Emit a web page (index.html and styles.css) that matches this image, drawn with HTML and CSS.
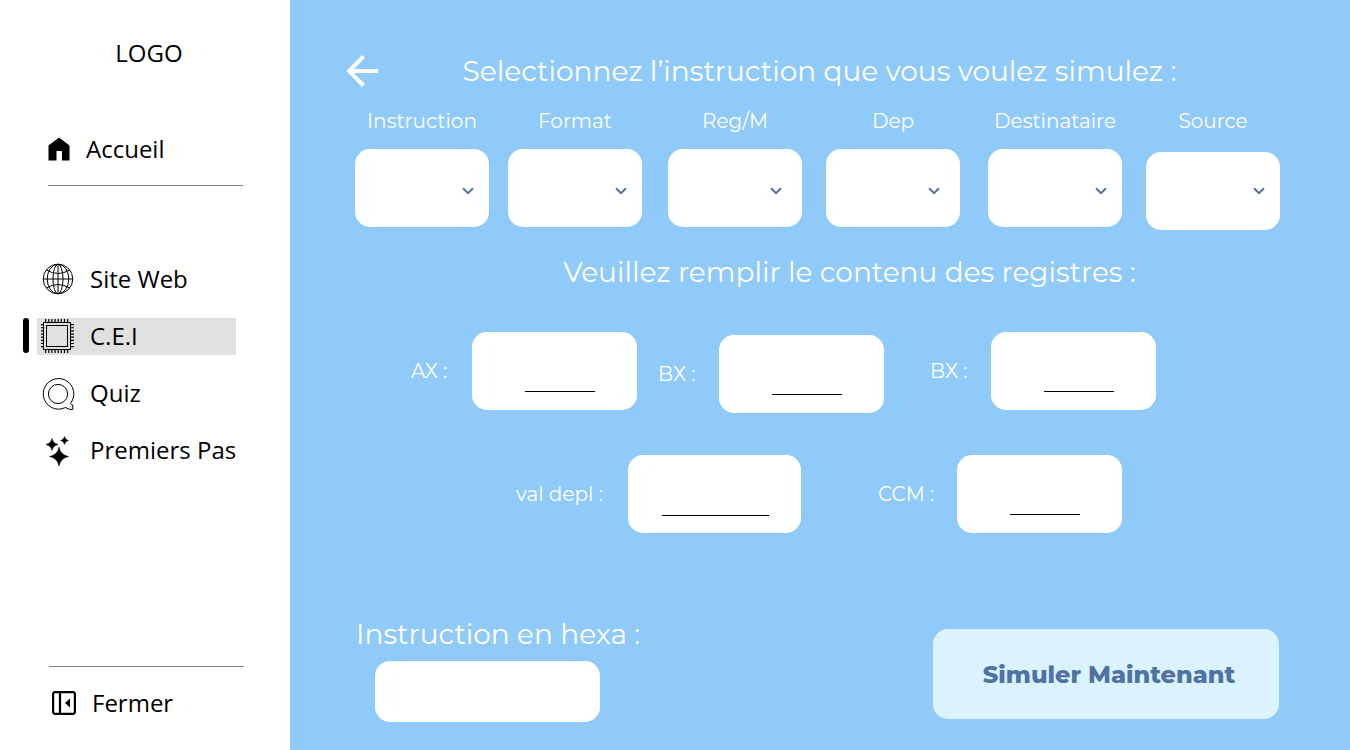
FILE: index.html
```html
<!DOCTYPE html>
<html lang="fr">
<head>
<meta charset="utf-8">
<meta name="viewport" content="width=device-width, initial-scale=1">
<title>C.E.I - Simulateur d'instructions</title>
<link rel="stylesheet" href="styles.css">
</head>
<body>
<div class="app">
  <aside class="sidebar">
    <div class="logo">LOGO</div>
    <a class="link link--home" href="#accueil">
      <svg class="icon-home" viewBox="0 0 22 24" aria-hidden="true"><path d="M0.500 8.500 11 0.500 21.500 8.500V23.500H14V14H8.500V23.500H0.500Z"/></svg>
      <span>Accueil</span>
    </a>
    <nav class="nav" aria-label="Menu principal">
      <a class="link" href="#site">
        <svg class="icon icon--line" viewBox="0 0 34 34" aria-hidden="true"><circle cx="17" cy="17" r="14.800"/><ellipse cx="17" cy="17" rx="5" ry="14.800"/><ellipse cx="17" cy="17" rx="10.800" ry="14.800"/><path d="M17 2.200V31.800M2.200 17H31.800M5.500 8Q17 15 28.500 8M5.500 26Q17 19 28.500 26"/></svg>
        <span>Site Web</span>
      </a>
      <a class="link link--active" href="#cei" aria-current="page">
        <svg class="icon icon--line" viewBox="0 0 34 34" aria-hidden="true"><rect x="2.500" y="3.500" width="27" height="27"/><rect x="5.500" y="6.500" width="21" height="21"/><path d="M4 1.500H29M4 32.500H29" stroke-width="3" stroke-dasharray="1.200 1.950"/><path d="M0.500 5V30M31.500 5V30" stroke-width="3" stroke-dasharray="1.200 1.950"/></svg>
        <span>C.E.I</span>
      </a>
      <a class="link" href="#quiz">
        <svg class="icon icon--line" viewBox="0 0 34 34" aria-hidden="true"><circle cx="17" cy="18" r="9.600"/><path d="M24.500 31.500A15.300 15.300 0 1 1 30.500 26L29.500 27.500Q30 29 31.800 29V33.500Q28 34 24.500 31.500Z"/></svg>
        <span>Quiz</span>
      </a>
      <a class="link" href="#premiers-pas">
        <svg class="icon" viewBox="0 0 34 34" aria-hidden="true"><path d="M18 14Q19.500 22 27.500 23.500Q19.500 25 18 33Q16.500 25 8.500 23.500Q16.500 22 18 14ZM11 5.500Q12 10.500 17 11.500Q12 12.500 11 17.500Q10 12.500 5 11.500Q10 10.500 11 5.500ZM23.500 3.500Q24.200 6.800 27.500 7.500Q24.200 8.200 23.500 11.500Q22.800 8.200 19.500 7.500Q22.800 6.800 23.500 3.500Z" stroke="#000" stroke-width="0.500"/></svg>
        <span>Premiers Pas</span>
      </a>
    </nav>
    <div class="sidebar-foot">
      <button class="link link--close" type="button">
        <svg class="icon-close" viewBox="0 0 24 24" aria-hidden="true"><path fill="none" stroke="#000" stroke-width="2.200" d="M2.500 1.100H21.500L22.900 2.500V21.500L21.500 22.900H2.500L1.100 21.500V2.500ZM8 1V23"/><path d="M13 12 18 7.500V16.500Z"/></svg>
        <span>Fermer</span>
      </button>
    </div>
  </aside>

  <main class="main">
    <header class="head">
      <a class="back" href="#retour" aria-label="Retour">
        <svg class="back-icon" viewBox="0 0 32 32" aria-hidden="true"><path d="M16.500 1.500 2 16 16.500 30.500M2.500 16H31"/></svg>
      </a>
      <h1 class="title">Selectionnez l’instruction que vous voulez simulez :</h1>
    </header>

    <form class="form">
      <div class="choices">
        <div class="choice"><label class="label" for="instruction">Instruction</label>
          <div class="picker"><select class="box select" id="instruction"><option></option></select><svg class="chevron" viewBox="0 0 12 8" aria-hidden="true"><path d="M1 1.200 6 6.200 11 1.200"/></svg></div></div>
        <div class="choice"><label class="label" for="format">Format</label>
          <div class="picker"><select class="box select" id="format"><option></option></select><svg class="chevron" viewBox="0 0 12 8" aria-hidden="true"><path d="M1 1.200 6 6.200 11 1.200"/></svg></div></div>
        <div class="choice"><label class="label" for="regm">Reg/M</label>
          <div class="picker"><select class="box select" id="regm"><option></option></select><svg class="chevron chevron--inner" viewBox="0 0 12 8" aria-hidden="true"><path d="M1 1.200 6 6.200 11 1.200"/></svg></div></div>
        <div class="choice"><label class="label" for="dep">Dep</label>
          <div class="picker"><select class="box select" id="dep"><option></option></select><svg class="chevron chevron--inner" viewBox="0 0 12 8" aria-hidden="true"><path d="M1 1.200 6 6.200 11 1.200"/></svg></div></div>
        <div class="choice"><label class="label" for="destinataire">Destinataire</label>
          <div class="picker"><select class="box select" id="destinataire"><option></option></select><svg class="chevron" viewBox="0 0 12 8" aria-hidden="true"><path d="M1 1.200 6 6.200 11 1.200"/></svg></div></div>
        <div class="choice"><label class="label" for="source">Source</label>
          <div class="picker"><select class="box select lowered" id="source"><option></option></select><svg class="chevron" viewBox="0 0 12 8" aria-hidden="true"><path d="M1 1.200 6 6.200 11 1.200"/></svg></div></div>
      </div>

      <h2 class="title title--registers">Veuillez remplir le contenu des registres :</h2>

      <div class="registers">
        <div class="register"><label class="label" for="ax">AX :</label><div class="box slot"><input class="value" id="ax" type="text"></div></div>
        <div class="register lowered"><label class="label" for="bx">BX :</label><div class="box slot"><input class="value" id="bx" type="text"></div></div>
        <div class="register"><label class="label" for="bx2">BX :</label><div class="box slot"><input class="value" id="bx2" type="text"></div></div>
      </div>
      <div class="registers registers--memory">
        <div class="register register--depl"><label class="label" for="depl">val depl :</label><div class="box slot"><input class="value" id="depl" type="text"></div></div>
        <div class="register register--ccm"><label class="label" for="ccm">CCM :</label><div class="box slot"><input class="value" id="ccm" type="text"></div></div>
      </div>

      <div class="result">
        <div class="hexa">
          <label class="title" for="hexa">Instruction en hexa :</label>
          <input class="box hexa-value" id="hexa" type="text">
        </div>
        <button class="submit" type="button">Simuler Maintenant</button>
      </div>
    </form>
  </main>
</div>
</body>
</html>
```
FILE: styles.css
```css
* { box-sizing: border-box; }

body {
  margin: 0;
  background: #fff;
  color: #000;
  font-family: "Open Sans", "Noto Sans", sans-serif;
}

.app {
  display: flex;
  min-height: 100vh;
}

/* Sidebar */
.sidebar {
  display: flex;
  flex-direction: column;
  flex: 0 0 290px;
  padding: 37px 46px 28px 37px;
  font-size: 24px;
  line-height: 32px;
}

.logo {
  padding-left: 17px;
  text-align: center;
}

.link {
  position: relative;
  display: flex;
  align-items: center;
  gap: 15px;
  width: 199px;
  height: 37px;
  padding: 0 0 2px 4px;
  border: 0;
  background: none;
  color: inherit;
  font: inherit;
  text-decoration: none;
  white-space: nowrap;
}

.link--home {
  gap: 16px;
  width: 195px;
  height: 55px;
  margin: 62px 0 0 11px;
  padding: 0 0 18px;
  border-bottom: 1px solid #808080;
}

.link--close {
  gap: 16px;
  width: 195px;
  padding-left: 3px;
}

.link--active { background: #e0e0e0; }

.link--active::before {
  content: "";
  position: absolute;
  top: 0;
  left: -14px;
  width: 6px;
  height: 35px;
  border-radius: 3px;
  background: #000;
}

.nav {
  display: flex;
  flex-direction: column;
  gap: 20px;
  margin-top: 75px;
}

.icon {
  flex: none;
  width: 34px;
  height: 34px;
}

.icon--line {
  fill: none;
  stroke: #000;
  stroke-width: 1;
}

.icon-home {
  width: 22px;
  height: 24px;
}

.icon-close {
  width: 24px;
  height: 24px;
}

.sidebar-foot {
  width: 195px;
  margin: auto 0 0 12px;
  padding-top: 18px;
  border-top: 1px solid #808080;
}

/* Simulator */
.main {
  display: flex;
  flex: 1;
  flex-direction: column;
  min-width: 0;
  padding: 52px 70px 28px 57px;
  background: #90caf9;
  color: #fff;
  font-family: Montserrat, Inter, sans-serif;
  font-weight: 400;
}

.head {
  display: flex;
  align-items: center;
}

.back {
  width: 32px;
  height: 32px;
}

.back-icon {
  display: block;
  fill: none;
  stroke: #fff;
  stroke-width: 4;
}

.title {
  margin: 0;
  font-size: 28px;
  font-weight: inherit;
  line-height: 38px;
}

.head .title {
  flex: 1;
  padding-right: 20px;
  text-align: center;
}

.title--registers {
  margin-top: 26px;
  padding-left: 72px;
  text-align: center;
}

.form {
  display: flex;
  flex: 1;
  flex-direction: column;
}

.label {
  font-size: 20px;
  line-height: 26px;
  white-space: nowrap;
}

.box {
  border: 0;
  border-radius: 15px;
  background: #fff;
  color: #4f73a3;
}

.lowered { margin-top: 3px; }

.choices {
  display: grid;
  grid-template-columns: 153fr 160fr 158fr 162fr 158fr 134fr;
  margin: 18px 0 0 8px;
}

.choice {
  display: flex;
  flex-direction: column;
  gap: 15px;
  width: 134px;
}

.choice .label { text-align: center; }

.picker {
  position: relative;
  height: 78px;
}

.select {
  display: block;
  width: 100%;
  height: 78px;
  padding: 0 36px 0 16px;
  font: inherit;
  font-size: 20px;
  appearance: none;
}

.chevron {
  position: absolute;
  top: 38px;
  right: 15px;
  width: 12px;
  height: 8px;
  fill: none;
  stroke: #4f73a3;
  stroke-width: 2;
  pointer-events: none;
}

.chevron--inner { right: 20px; }

.registers {
  display: grid;
  grid-template-columns: 247fr 272fr 350fr;
  align-items: start;
  margin: 41px 0 0 64px;
}

.registers--memory {
  grid-template-columns: 362fr 402fr;
  margin: 42px 0 0 169px;
}

.register {
  display: grid;
  grid-template-columns: 61px 165px;
  align-items: center;
}

.register--depl { grid-template-columns: 112px 173px; }
.register--ccm { grid-template-columns: 79px 165px; }

.slot {
  height: 78px;
  padding: 20px 42px 18px 53px;
}

.register--depl .slot { padding: 20px 32px 17px 34px; }

.value {
  display: block;
  width: 100%;
  height: 40px;
  padding: 0;
  border: 0;
  border-bottom: 1px solid #000;
  background: none;
  color: #000;
  font: inherit;
  font-size: 20px;
  text-align: center;
}

.register--depl .value { height: 41px; }

.result {
  display: flex;
  align-items: flex-end;
  justify-content: space-between;
  margin-top: auto;
  padding-left: 9px;
}

.hexa {
  display: flex;
  flex-direction: column;
  gap: 8px;
}

.hexa-value {
  width: 225px;
  height: 61px;
  margin-left: 19px;
  padding: 0 16px;
  font: inherit;
  font-size: 20px;
}

.submit {
  width: 346px;
  height: 90px;
  margin: 0 1px 3px 0;
  padding: 0 0 0 6px;
  border: 0;
  border-radius: 15px;
  background: #dbf2ff;
  color: #4f73a3;
  font: inherit;
  font-size: 24px;
  font-weight: 800;
}
```
